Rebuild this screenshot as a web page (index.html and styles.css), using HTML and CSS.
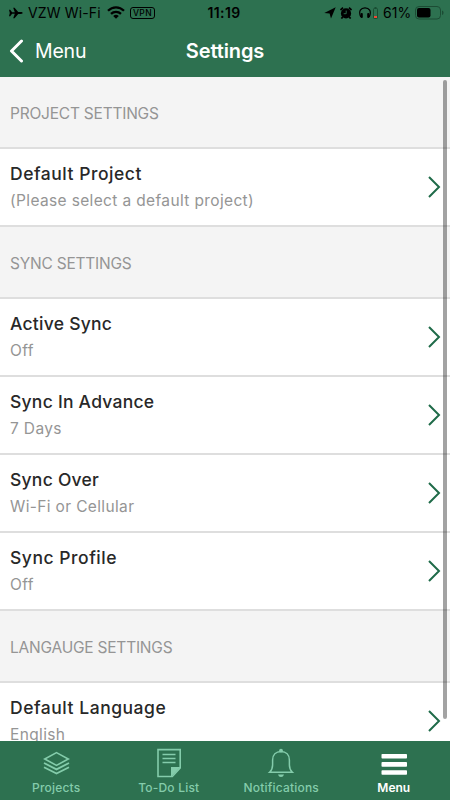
FILE: index.html
```
<!DOCTYPE html>
<html lang="en">
<head>
<meta charset="utf-8">
<title>Settings</title>
<link rel="stylesheet" href="styles.css">
</head>
<body>
<svg width="0" height="0" class="defs"><symbol id="chevron" viewBox="0 0 14 24"><path d="M2 2L12 12L2 22" fill="none" stroke="#1f6b49" stroke-width="2"/></symbol></svg>
<div class="app">
  <header class="header">
    <div class="status">
      <div class="status-left">
        <svg class="plane" width="14" height="12" viewBox="0 0 14 12"><path d="M0 2.8H1.2L3.1 5.2H5.8L4.2 .8H5.6L9.2 5.1H12C13 5.1 13.6 5.5 13.6 6S13 6.9 12 6.9H9.2L5.6 11.2H4.2L5.8 6.8H3.1L1.2 9.2H0L.8 6Z"/></svg>
        <span class="carrier">VZW Wi-Fi</span>
        <svg class="wifi" width="18" height="13" viewBox="0 0 18 13"><g fill="none" stroke="#000" stroke-width="2.3"><path d="M1 4.8C5.6 .2 12.4 .2 17 4.8"/><path d="M4 7.9C6.9 5.1 11.1 5.1 14 7.9"/></g><path d="M6.2 10Q9 7.6 11.8 10L9 12.8Z"/></svg>
        <span class="vpn">VPN</span>
      </div>
      <span class="time">11:19</span>
      <div class="status-right">
        <svg class="arrow" width="12" height="12" viewBox="0 0 12 12"><path d="M11.7 .3L7 11.5L5.6 6.4L.3 6Z"/></svg>
        <svg class="alarm" width="12" height="12" viewBox="0 0 12 12"><circle cx="6" cy="6.4" r="5.1"/><path d="M.5 3L3 .7M11.5 3L9 .7M2.7 10L1.4 11.6M9.3 10L10.6 11.6" stroke="#000" stroke-width="1.7"/><path d="M6.2 3.6V6.7H3.7" fill="none" stroke="#2d7150" stroke-width=".9"/></svg>
        <svg class="phones" width="20" height="12" viewBox="0 0 20 12"><path d="M1.8 10C-1 4 2 .8 6 .8S13 4 10.2 10" fill="none" stroke="#000" stroke-width="1.2"/><rect x="1.6" y="6" width="2.2" height="5" rx="1"/><rect x="8.2" y="6" width="2.2" height="5" rx="1"/><rect x="14.5" y="1.5" width="4" height="10" rx=".8" fill="none" stroke="#194d32"/><path d="M15.5 .5H17.5" stroke="#194d32"/><rect x="15" y="9" width="3" height="2" fill="#ef4935"/></svg>
        <span class="percent">61%</span>
        <svg class="battery" width="29" height="14" viewBox="0 0 29 14"><rect x=".5" y=".5" width="25" height="12.5" rx="3.5" fill="none" stroke="#1c4c34"/><rect x="2" y="2" width="13.5" height="9.5" rx="2"/><path d="M27 4.6Q28.6 5 28.6 6.8T27 9Z" fill="#1c4c34"/></svg>
      </div>
    </div>
    <div class="nav">
      <div class="back">
        <svg width="15" height="24" viewBox="0 0 15 24"><path d="M12.5 2L2.5 12L12.5 22" fill="none" stroke="#fff" stroke-width="3" stroke-linecap="round" stroke-linejoin="round"/></svg>
        <span class="back-label">Menu</span>
      </div>
      <h1>Settings</h1>
      <span></span>
    </div>
  </header>
  <main class="list">
    <h2>PROJECT SETTINGS</h2>
    <div class="row"><div><h3 class="wide">Default Project</h3><p>(Please select a default project)</p></div><svg class="chev"><use href="#chevron"/></svg></div>
    <h2>SYNC SETTINGS</h2>
    <div class="row"><div><h3>Active Sync</h3><p>Off</p></div><svg class="chev"><use href="#chevron"/></svg></div>
    <div class="row"><div><h3>Sync In Advance</h3><p>7 Days</p></div><svg class="chev"><use href="#chevron"/></svg></div>
    <div class="row"><div><h3>Sync Over</h3><p>Wi-Fi or Cellular</p></div><svg class="chev"><use href="#chevron"/></svg></div>
    <div class="row"><div><h3 class="wide">Sync Profile</h3><p>Off</p></div><svg class="chev"><use href="#chevron"/></svg></div>
    <h2>LANGAUGE SETTINGS</h2>
    <div class="row"><div><h3 class="wide">Default Language</h3><p>English</p></div><svg class="chev"><use href="#chevron"/></svg></div>
    <div class="scrollbar"></div>
  </main>
  <nav class="tabs">
    <div class="tab">
      <svg width="30" height="32" viewBox="0 0 30 32"><g fill="none" stroke="#84ccab" stroke-width="1.6"><path d="M15.5 4.6L27.3 11L15.5 17.4L3.7 11Z"/><path d="M3 15L15.5 21.4L28 15M3 19.2L15.5 25.6L28 19.2" stroke-width="1.8"/></g></svg>
      <span>Projects</span>
    </div>
    <div class="tab">
      <svg width="30" height="32" viewBox="0 0 30 32"><path d="M4 1.6H26.2V20L18.3 28.5H4Z" fill="none" stroke="#84ccab" stroke-width="1.6"/><path d="M8.5 6.5H21.5M8.5 10.5H21.5M8.5 14.5H21.5" stroke="#84ccab" stroke-width="1.4"/><path d="M17 19H26.5L17 29Z" fill="#84ccab"/></svg>
      <span>To-Do List</span>
    </div>
    <div class="tab">
      <svg width="30" height="32" viewBox="0 0 30 32"><path d="M3.6 24.2C6 22 6.6 20.3 6.6 17V12C6.6 6.7 10 3.4 15 3.4S23.4 6.7 23.4 12V17C23.4 20.3 24 22 26.4 24.2Z" fill="none" stroke="#84ccab" stroke-width="1.5"/><circle cx="15" cy="2.7" r="1.9" fill="#84ccab"/><path d="M12 26.4H18Q17.3 29 15 29T12 26.4Z" fill="#84ccab"/></svg>
      <span>Notifications</span>
    </div>
    <div class="tab active">
      <svg width="30" height="32" viewBox="0 0 30 32"><g fill="#fff"><rect x="2.5" y="6" width="25.5" height="4.6" rx=".8"/><rect x="2.5" y="14.1" width="25.5" height="4.6" rx=".8"/><rect x="2.5" y="22.2" width="25.5" height="4.6" rx=".8"/></g></svg>
      <span>Menu</span>
    </div>
  </nav>
</div>
</body>
</html>
```
FILE: styles.css
```
* { box-sizing: border-box; margin: 0; padding: 0; }
body { font-family: Inter, "Liberation Sans", sans-serif; background: #fff; overflow: hidden; }
svg { display: block; flex: none; }
.defs { position: absolute; }
.app { width: 450px; height: 800px; display: flex; flex-direction: column; }
.header { height: 77px; background: #2d7150; flex: none; }
.status { height: 25px; display: grid; grid-template-columns: 1fr auto 1fr; align-items: center; color: #000; font-size: 14px; line-height: 25px; }
.status-left, .status-right { display: flex; align-items: center; }
.status-left { padding-left: 9px; }
.carrier { margin-left: 5px; letter-spacing: .15px; width: 73px; white-space: nowrap; }
.wifi { margin-left: 6px; }
.vpn { margin-left: 5px; width: 25px; height: 12px; border: 1px solid #000; border-radius: 3px; font-size: 8.5px; line-height: 10px; font-weight: 500; text-align: center; letter-spacing: .4px; }
.time { font-size: 14px; font-weight: 600; letter-spacing: .4px; position: relative; left: -1px; }
.status-right { justify-content: flex-end; padding-right: 6px; }
.arrow { position: relative; left: -2px; }
.alarm { margin-left: 3px; position: relative; left: -1px; }
.phones { margin-left: 7px; position: relative; left: -1px; }
.percent { margin-left: 3px; width: 29px; white-space: nowrap; letter-spacing: 0; }
.battery { margin-left: 3px; width: 29px; }
.nav { height: 52px; display: grid; grid-template-columns: 1fr auto 1fr; align-items: center; color: #fff; }
.back { display: flex; align-items: center; padding-left: 9px; gap: 11px; }
.back-label { font-size: 19.5px; letter-spacing: -.2px; }
h1 { font-size: 20px; font-weight: 600; line-height: 24px; letter-spacing: -.1px; }
.list { flex: 1; min-height: 0; overflow: hidden; position: relative; }
h2 { height: 72px; background: #f4f4f4; border-bottom: 2px solid #dedede; padding: 2px 10px 0; font-size: 15.5px; font-weight: 400; line-height: 70px; color: #959595; letter-spacing: -.22px; }
.row { height: 78px; border-bottom: 2px solid #dedede; padding: 12px 9px 0 10px; display: flex; justify-content: space-between; }
h3 { font-size: 17.5px; font-weight: 500; line-height: 26px; color: #282828; letter-spacing: .25px; }
.wide { letter-spacing: .53px; }
p { font-size: 15.5px; line-height: 28px; color: #959595; letter-spacing: .36px; }
.chev { width: 14px; height: 24px; margin-top: 14px; }
.scrollbar { position: absolute; top: 3px; right: 3px; width: 4px; height: 639px; border-radius: 2px; background: rgba(0,0,0,.36); }
.tabs { height: 59px; flex: none; background: #2d7150; display: grid; grid-template-columns: repeat(4, 1fr); padding-top: 7px; }
.tab { display: flex; flex-direction: column; align-items: center; color: #84ccab; font-size: 12px; font-weight: 500; line-height: 16px; letter-spacing: .2px; }
.tab svg { margin-bottom: 0; }
.active { color: #fff; font-weight: 600; letter-spacing: 0; }
```
